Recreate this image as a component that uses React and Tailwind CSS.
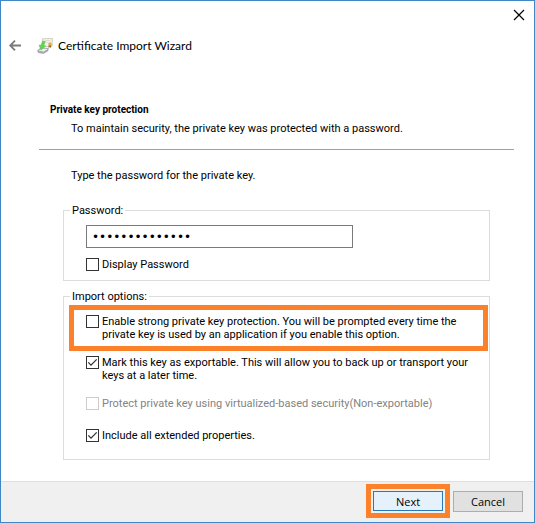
import React, { useState } from 'react';

// Square check box with its label text next to it
function CheckOption({ id, label, checked, onChange, disabled = false }) {
  return (
    <div className={`flex items-start gap-[3px] ${disabled ? 'text-[#838383]' : 'text-black'}`}>
      <span className="relative size-[13px] shrink-0">
        <input
          type="checkbox"
          id={id}
          checked={checked}
          onChange={onChange}
          disabled={disabled}
          className="block size-[13px] appearance-none border border-[#333333] bg-white disabled:border-[#cccccc]"
        />
        {checked && (
          <svg viewBox="0 0 13 13" className="pointer-events-none absolute inset-0 size-[13px]" fill="none" stroke="#333333" strokeWidth="1.3">
            <path d="M2.3 6.4 L5 9.1 L10.7 3.4" />
          </svg>
        )}
      </span>
      <label htmlFor={id}>{label}</label>
    </div>
  );
}

// Certificate with a green arrow pointing down into a disk
function CertificateIcon() {
  return (
    <svg viewBox="0 0 16 16" className="size-4" aria-hidden="true">
      <path d="M5.4 0.8 L15.4 0.4 L15.2 8.2 L5.4 8.8 Z" fill="#f6f3e8" stroke="#bdbbb2" strokeWidth="0.7" />
      <path d="M8 2.6 L13.4 2.4 M9 4.4 L11.6 4.2" stroke="#d5d0bd" strokeWidth="0.7" />
      <path d="M0.6 12.4 L4 9.8 L11.4 10.4 L10.8 13 L6.4 15.5 L1.2 14.6 Z" fill="#a9adb0" stroke="#85898c" strokeWidth="0.5" />
      <path d="M1.6 12.4 L4.4 10.4 L10.6 10.9 L6.6 13.4 Z" fill="#f2f4f4" />
      <path d="M5.6 3 L8.4 3.4 L6.8 7.4 L8.8 7.8 L4 12.2 L2 7 L4 7.2 Z" fill="#62d452" stroke="#4bb843" strokeWidth="0.4" />
      <path d="M11.8 6.6 L11.4 10 L12.8 9 L14 10 L14.2 6.6 Z" fill="#8d6a2c" />
      <circle cx="13" cy="6" r="1.7" fill="#e2ab45" />
    </svg>
  );
}

export default function App() {
  const [password, setPassword] = useState('abcdefghijklmn');
  const [options, setOptions] = useState({
    display: false,
    strong: false,
    exportable: true,
    virtualized: false,
    extended: true,
  });

  const toggle = (name) => () => {
    setOptions((prev) => ({ ...prev, [name]: !prev[name] }));
  };

  return (
    <div className="flex min-h-screen flex-col border border-[#3f87c6] bg-white font-['Roboto',sans-serif] text-[11px] leading-[13px] text-black">
      {/* Title bar */}
      <header className="font-['Lato',sans-serif]">
        <div className="flex h-7 items-center justify-end pr-[9px]">
          <button type="button" aria-label="Close">
            <svg viewBox="0 0 12 12" className="size-3" fill="none" stroke="#000000" strokeWidth="1.2">
              <path d="M1 1 L11 11 M11 1 L1 11" />
            </svg>
          </button>
        </div>
        <div className="flex h-[34px] items-center pl-2">
          <button type="button" aria-label="Back">
            <svg viewBox="0 0 12 12" className="size-3" fill="none" stroke="#7a7a7a" strokeWidth="1.8">
              <path d="M12 5.5 H1.2 M6 0.7 L1.2 5.5 L6 10.3" />
            </svg>
          </button>
          <span className="ml-4">
            <CertificateIcon />
          </span>
          <h1 className="ml-[5px] text-[12px] leading-4">Certificate Import Wizard</h1>
        </div>
      </header>

      <main className="flex-1 pt-10 pr-5 pb-5 pl-[38px]">
        <h2 className="pl-[11px] text-[10px] leading-[13px] font-bold">Private key protection</h2>
        <p className="mt-[6px] pl-8">To maintain security, the private key was protected with a password.</p>
        <hr className="mt-[14px] border-[#a0a0a0]" />
        <p className="mt-[19px] pl-8">Type the password for the private key.</p>

        {/* Password */}
        <fieldset className="mt-[22px] mr-6 ml-6 border border-[#dcdcdc] pr-[22px] pb-[9px] pl-[22px]">
          <legend className="-ml-4 px-[2px]">
            <label htmlFor="password">Password:</label>
          </legend>
          <input
            type={options.display ? 'text' : 'password'}
            id="password"
            value={password}
            onChange={(e) => setPassword(e.target.value)}
            className="mt-2 mb-[10px] block h-[23px] w-[70%] border border-[#7a7a7a] bg-white px-[5px] font-['DejaVu_Sans',sans-serif] text-[12px]"
          />
          <CheckOption id="display" label="Display Password" checked={options.display} onChange={toggle('display')} />
        </fieldset>

        {/* Import options */}
        <fieldset className="mt-[9px] mr-6 ml-6 border border-[#dcdcdc] pb-[17px]">
          <legend className="ml-[6px] px-[2px]">Import options:</legend>
          <div className="mt-[2px] mr-[1px] ml-[5px] border-5 border-[#fb812b] py-[5px] pr-2 pl-3">
            <CheckOption
              id="strong"
              label={<>Enable strong private key protection. You will be prompted every time the<br />private key is used by an application if you enable this option.</>}
              checked={options.strong}
              onChange={toggle('strong')}
            />
          </div>
          <div className="mt-[5px] pr-2 pl-[22px]">
            <CheckOption
              id="exportable"
              label={<>Mark this key as exportable. This will allow you to back up or transport your<br />keys at a later time.</>}
              checked={options.exportable}
              onChange={toggle('exportable')}
            />
          </div>
          <div className="mt-[15px] pr-2 pl-[22px]">
            <CheckOption
              id="virtualized"
              label="Protect private key using virtualized-based security(Non-exportable)"
              checked={options.virtualized}
              onChange={toggle('virtualized')}
              disabled
            />
          </div>
          <div className="mt-[19px] pr-2 pl-[22px]">
            <CheckOption id="extended" label="Include all extended properties." checked={options.extended} onChange={toggle('extended')} />
          </div>
        </fieldset>
      </main>

      <footer className="flex items-center justify-end gap-[3px] border-t border-[#dfdfdf] bg-[#f0f0f0] pt-[2px] pr-[11px] pb-1 font-['Open_Sans',sans-serif] text-[11px]">
        <div className="border-5 border-[#fb812b] p-[2px]">
          <button type="button" className="block h-5 w-[70px] border border-[#2a78b5] bg-[#e5f1fb]">
            Next
          </button>
        </div>
        <button type="button" className="h-[21px] w-[70px] border border-[#adadad] bg-[#e1e1e1]">
          Cancel
        </button>
      </footer>
    </div>
  );
}
